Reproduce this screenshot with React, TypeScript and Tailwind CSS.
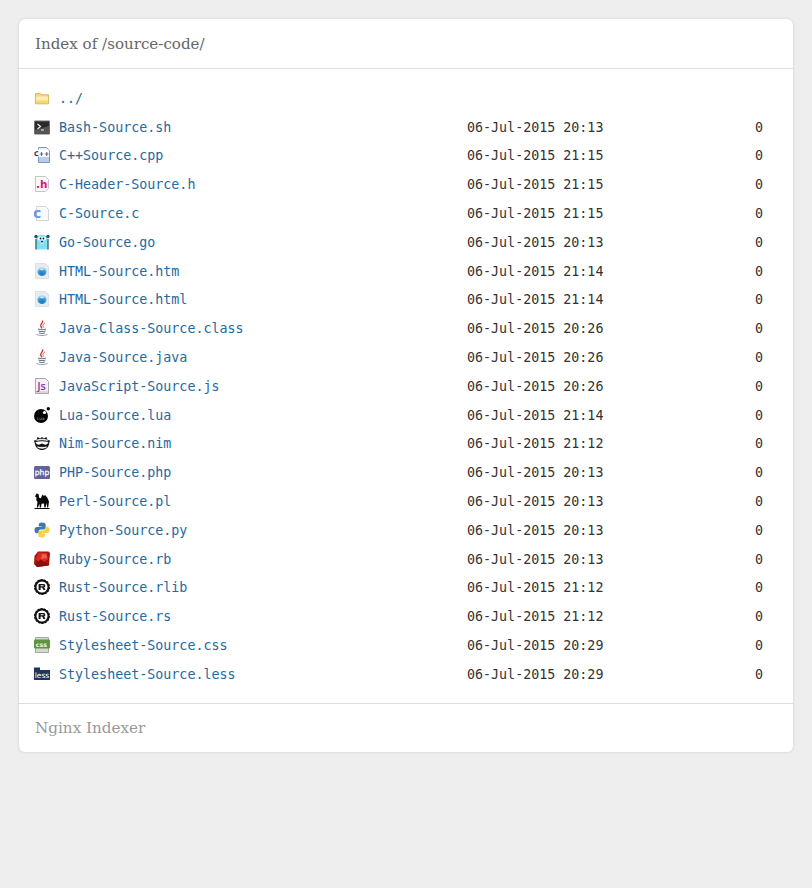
import type { ReactNode } from "react";

const Svg = ({ children }: { children: ReactNode }) => (
  <svg width="16" height="16" viewBox="0 0 16 16" className="block shrink-0 -translate-y-px">
    {children}
  </svg>
);

const microText = "'DejaVu Sans', sans-serif";

const FolderIcon = () => (
  <Svg>
    <path d="M1.500 3.500h5l1 1.300h7v9h-13z" fill="#f6d77c" stroke="#dcb765" />
    <path d="M2.200 6.500h11.600v6.600H2.200z" fill="#fcedb4" />
    <path d="M2.200 10.500h11.600v2.600H2.200z" fill="#f7d768" />
  </Svg>
);

const BashIcon = () => (
  <Svg>
    <rect x="0" y="1.500" width="16" height="14" rx="1" fill="#6e6e6e" />
    <rect x="1" y="2.500" width="14" height="12" fill="#2a2a2a" />
    <path d="M1 11l14-4v7.500H1z" fill="#555555" />
    <path d="M3.500 5l3 2.500-3 2.500" fill="none" stroke="#f0f0f0" strokeWidth="1.200" />
    <path d="M7 11h3" stroke="#f0f0f0" />
  </Svg>
);

const CppIcon = () => (
  <Svg>
    <path d="M4.500 .5h8l3 3v12h-11z" fill="#e6eef8" stroke="#7f97b8" />
    <path d="M5 10h10v5H5z" fill="#b9cde6" />
    <rect x="0" y="2.500" width="15" height="7" rx="1" fill="#ffffff" />
    <text x="0" y="8.500" fontSize="6.400" fontWeight="700" fill="#0b2a63" fontFamily={microText}>
      C++
    </text>
  </Svg>
);

const HeaderIcon = () => (
  <Svg>
    <path d="M1.500 .5h10l3 3v9l-3 3h-10z" fill="#fafafa" stroke="#c4c4c4" />
    <text x="2" y="12" fontSize="10.500" fontWeight="700" fill="#e0107c" fontFamily={microText}>
      .h
    </text>
  </Svg>
);

const CIcon = () => (
  <Svg>
    <path d="M2.500 1.500h9l3 3v11h-12z" fill="#fafafa" stroke="#d5d5d5" />
    <text x="-1" y="13" fontSize="14" fontWeight="700" fill="#6b97ee" fontFamily={microText}>
      c
    </text>
  </Svg>
);

const GoIcon = () => (
  <Svg>
    <path d="M2.500 2.500c3-2.500 8-2.500 11 0v13h-11z" fill="#7fe0f8" />
    <path d="M2 5v10.500M14 5v10.500" stroke="#1c4a58" strokeWidth="1.200" />
    <circle cx="2" cy="2.500" r="1.700" fill="#1f5666" />
    <circle cx="14" cy="2.500" r="1.700" fill="#1f5666" />
    <circle cx="6" cy="4.500" r="2" fill="#fff" />
    <circle cx="10" cy="4.500" r="2" fill="#fff" />
    <circle cx="6.500" cy="4.500" r=".9" fill="#111" />
    <circle cx="9.500" cy="4.500" r=".9" fill="#111" />
    <path d="M7 7h2v1.500H7z" fill="#333" />
    <path d="M6.500 8.500h3v1.500h-3z" fill="#f2e6c8" />
  </Svg>
);

const HtmlIcon = () => (
  <Svg>
    <defs>
      <radialGradient id="globe" cx="50%" cy="75%" r="70%">
        <stop offset="0%" stopColor="#1f73b8" />
        <stop offset="60%" stopColor="#3f9bd8" />
        <stop offset="100%" stopColor="#bde3f7" />
      </radialGradient>
    </defs>
    <path d="M1.500 .5h10l3 3v12h-13z" fill="#e9ecef" stroke="#dcdfe3" />
    <circle cx="8" cy="8.500" r="4.600" fill="url(#globe)" />
    <ellipse cx="8" cy="6.300" rx="2.200" ry="1.100" fill="#bfe6f9" />
  </Svg>
);

const JavaIcon = () => (
  <Svg>
    <path d="M8.500 .5c1.200 2.200-2.500 3.200-1.800 5.500.3.800 1 1.500 1.200 2.500" fill="none" stroke="#c4342c" strokeWidth="1.300" />
    <path d="M11 3c-2.500 1.200-2.500 2.800-1.200 4.500" fill="none" stroke="#d9584f" />
    <path d="M4 9c2.500.9 5.500.9 8 0M4.500 11c2.300.7 4.700.7 7 0M5 13c2 .6 4 .6 6 0" fill="none" stroke="#66788a" strokeWidth="1.100" />
    <path d="M2.500 14.500c3.500 1.400 7.500 1.400 11 0" fill="none" stroke="#98a4ad" />
  </Svg>
);

const JsIcon = () => (
  <Svg>
    <path d="M1.500 .5h10l3 3v12h-13z" fill="#f4f1f6" stroke="#a9a9a9" />
    <path d="M2 13h12v2H2z" fill="#d8d8d8" />
    <text x="3.500" y="12" fontSize="10" fill="#7d1fa5" stroke="#7d1fa5" strokeWidth=".2" fontFamily={microText}>
      Js
    </text>
  </Svg>
);

const LuaIcon = () => (
  <Svg>
    <circle cx="7" cy="9" r="7" fill="#050505" />
    <circle cx="14.300" cy="1.800" r="1.700" fill="#050505" />
    <circle cx="10.500" cy="5.500" r="1.600" fill="#fff" />
    <text x="3" y="13" fontSize="4.200" fill="#9a9a9a" fontFamily={microText}>
      Lua
    </text>
  </Svg>
);

const NimIcon = () => (
  <Svg>
    <path d="M0 5.500l2.500-.5L3.500 2 6 3.500 8 2l2 1.500L12.500 2l1 3 2.500.5-1 3.500c-.5 3.500-3.500 6-7 6s-6.500-2.500-7-6z" fill="#111" />
    <path d="M3 4.500c3-1 7-1 10 0l1 1.500c-4-1-8-1-12 0z" fill="#e8e8e8" />
    <path d="M1.500 7c4-1 9-1 13 0-.5 2-2.500 3-4 2.500L8 8.500l-2.500 1c-1.500.5-3.500-.5-4-2.500z" fill="#fff" />
    <path d="M3.500 12c3 1.700 6 1.700 9 0-2 .5-7 .5-9 0z" fill="#fff" stroke="#fff" strokeWidth=".8" />
  </Svg>
);

const PhpIcon = () => (
  <Svg>
    <rect x="0" y="2" width="16" height="13" rx="1.500" fill="#62629c" />
    <text x="0.800" y="11.200" fontSize="7.600" fill="#fff" stroke="#fff" strokeWidth=".25" fontFamily={microText}>
      php
    </text>
  </Svg>
);

const PerlIcon = () => (
  <Svg>
    <path d="M1 3.500L2.500.5 4.500 1l.8 4 1.500.3L8.500 1.500 10 3l1.200-1 2.300 3 1.500 3.500-.8 6h-1l-.7-4.500-1 4.500h-1.200L10 10.500l-2.500.3-.5 3.700H5.800l-.3-3.700-1.600 3.700H2.800l.7-5.500-1.300-2L2.500 4.500z" fill="#0a0a0a" />
    <path d="M.5 15.500h15" stroke="#0a0a0a" />
  </Svg>
);

const PythonIcon = () => (
  <Svg>
    <path d="M8 .500C5.200.500 4.800 1.600 4.800 2.800v1.700h3.400V5H3C1.400 5 .5 6.200.5 8s.9 3.200 2.300 3.200h1.900V9.400C4.700 8 5.700 7.400 6.800 7.400h3.100c1.100 0 1.800-.8 1.800-1.900V2.800C11.700 1.500 10.700.500 8 .500z" fill="#3c78aa" />
    <path d="M8 15.500c2.800 0 3.200-1.100 3.200-2.300v-1.700H7.800V11H13c1.600 0 2.500-1.200 2.500-3s-.9-3.200-2.300-3.200h-1.900v1.800c0 1.400-1 2-2.100 2H6.100c-1.100 0-1.800.8-1.800 1.900v2.700c0 1.300 1 2.300 3.700 2.300z" fill="#f8cf45" />
  </Svg>
);

const RubyIcon = () => (
  <Svg>
    <path d="M4 .5h10.500L16 2l-1 12.500L3 16 0 13l.5-8z" fill="#a9130d" />
    <path d="M4.500 1.500l8.500.5 1 6.500-7 4L1.500 8z" fill="#d92a20" />
    <path d="M8 3l4.500.5.5 3.500L7 8z" fill="#ee5e52" />
    <path d="M1 13l6-4.500 7.500 6L3 16z" fill="#870f0a" />
  </Svg>
);

const RustIcon = () => (
  <Svg>
    <circle cx="8" cy="8" r="6.500" fill="#fff" stroke="#111" strokeWidth="2" />
    <circle cx="8" cy="8" r="7.400" fill="none" stroke="#111" strokeWidth="1.200" strokeDasharray="2.400 .9" />
    <path d="M4.600 4.900h4.900c2.300 0 2.400 3.100.6 3.400l1.400 2.800H9.400L8.200 8.500H6.600v2.600H4.600zM6.600 6.200v1.100h2.600c.6 0 .6-1.100 0-1.100z" fill="#111" />
  </Svg>
);

const CssIcon = () => (
  <Svg>
    <path d="M1.500 .5h13v15h-13z" fill="#d4d8d0" stroke="#a3aa9e" />
    <rect x="0" y="2.500" width="16" height="9" rx="1" fill="#5f9440" />
    <text x="1.800" y="9.500" fontSize="6.300" fontWeight="700" fill="#eaf3e2" fontFamily={microText}>
      css
    </text>
  </Svg>
);

const LessIcon = () => (
  <Svg>
    <path d="M0 1.500h6v3H0z" fill="#1d365d" />
    <rect x="0" y="4" width="16" height="10" fill="#1d365d" />
    <text x="0.700" y="12" fontSize="7.500" fill="#fff" fontFamily={microText}>
      less
    </text>
  </Svg>
);

const files = [
  { name: "Bash-Source.sh", date: "06-Jul-2015 20:13", icon: <BashIcon /> },
  { name: "C++Source.cpp", date: "06-Jul-2015 21:15", icon: <CppIcon /> },
  { name: "C-Header-Source.h", date: "06-Jul-2015 21:15", icon: <HeaderIcon /> },
  { name: "C-Source.c", date: "06-Jul-2015 21:15", icon: <CIcon /> },
  { name: "Go-Source.go", date: "06-Jul-2015 20:13", icon: <GoIcon /> },
  { name: "HTML-Source.htm", date: "06-Jul-2015 21:14", icon: <HtmlIcon /> },
  { name: "HTML-Source.html", date: "06-Jul-2015 21:14", icon: <HtmlIcon /> },
  { name: "Java-Class-Source.class", date: "06-Jul-2015 20:26", icon: <JavaIcon /> },
  { name: "Java-Source.java", date: "06-Jul-2015 20:26", icon: <JavaIcon /> },
  { name: "JavaScript-Source.js", date: "06-Jul-2015 20:26", icon: <JsIcon /> },
  { name: "Lua-Source.lua", date: "06-Jul-2015 21:14", icon: <LuaIcon /> },
  { name: "Nim-Source.nim", date: "06-Jul-2015 21:12", icon: <NimIcon /> },
  { name: "PHP-Source.php", date: "06-Jul-2015 20:13", icon: <PhpIcon /> },
  { name: "Perl-Source.pl", date: "06-Jul-2015 20:13", icon: <PerlIcon /> },
  { name: "Python-Source.py", date: "06-Jul-2015 20:13", icon: <PythonIcon /> },
  { name: "Ruby-Source.rb", date: "06-Jul-2015 20:13", icon: <RubyIcon /> },
  { name: "Rust-Source.rlib", date: "06-Jul-2015 21:12", icon: <RustIcon /> },
  { name: "Rust-Source.rs", date: "06-Jul-2015 21:12", icon: <RustIcon /> },
  { name: "Stylesheet-Source.css", date: "06-Jul-2015 20:29", icon: <CssIcon /> },
  { name: "Stylesheet-Source.less", date: "06-Jul-2015 20:29", icon: <LessIcon /> },
];

const Row = ({ icon, name, date, size }: { icon: ReactNode; name: string; date?: string; size?: string }) => (
  <div className="flex h-[28.8px] items-center whitespace-pre">
    <span className="w-[25px] shrink-0">{icon}</span>
    <a className="w-[408px] shrink-0 text-[#256aa0]">{name}</a>
    <span className="w-[288px] shrink-0 text-[#333333]">{date}</span>
    <span className="text-[#333333]">{size}</span>
  </div>
);

export default function App() {
  return (
    <div className="min-h-[888px] bg-[#eeeeee] px-[19px] pt-[19px]">
      <div className="overflow-hidden rounded-[6px] bg-white shadow-[0_0_3px_rgba(0,0,0,0.15)]">
        <h1 className="h-[50px] border-b border-[#dddddd] pl-4 text-[15.1px] leading-[50px] font-normal text-[#666666] [font-family:'DejaVu_Serif',serif]">
          Index of /source-code/
        </h1>
        <div className="h-[634px] pt-[15.4px] pl-[15px] text-[13.33px] [font-family:'DejaVu_Sans_Mono',monospace]">
          <Row icon={<FolderIcon />} name="../" />
          {files.map((f) => (
            <Row key={f.name} icon={f.icon} name={f.name} date={f.date} size="0" />
          ))}
        </div>
        <div className="h-[49px] border-t border-[#dddddd] pl-4 text-[15.2px] leading-[48px] text-[#999999] [font-family:'DejaVu_Serif',serif]">
          Nginx Indexer
        </div>
      </div>
    </div>
  );
}
